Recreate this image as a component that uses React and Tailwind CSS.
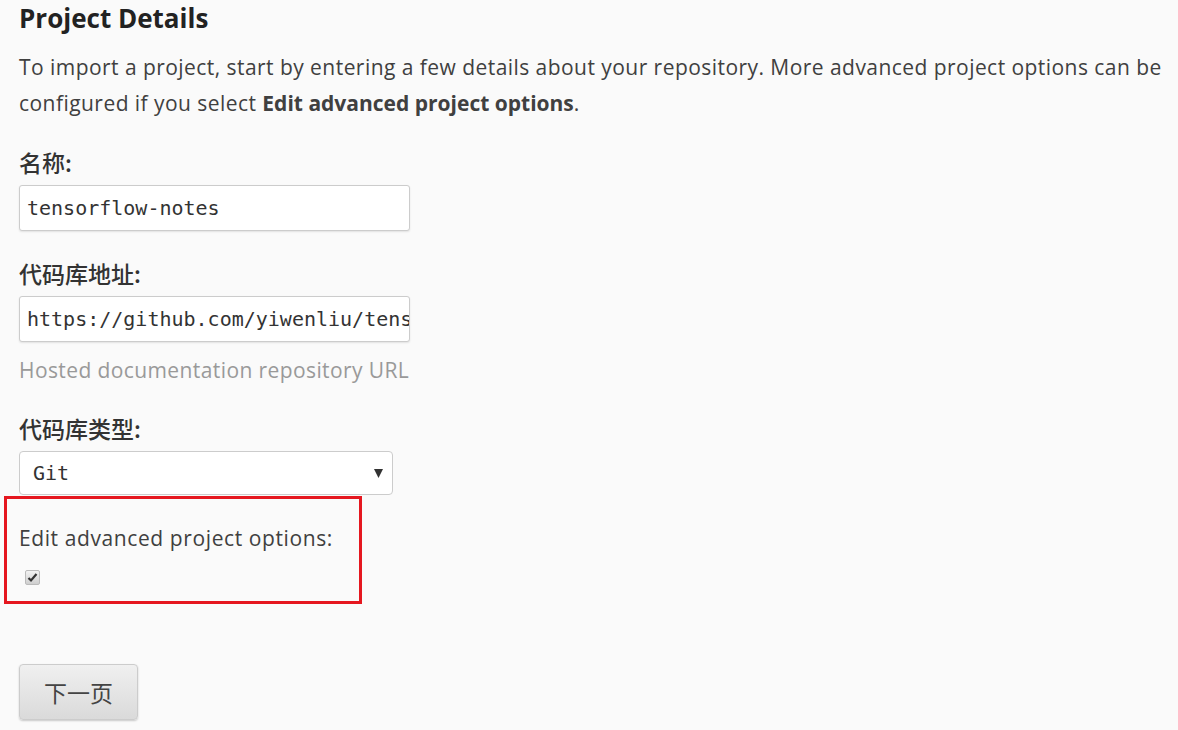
export default function App() {
  const sans = { fontFamily: '"Open Sans", "Noto Sans CJK SC", sans-serif' };
  const cjk = { fontFamily: '"Noto Sans CJK SC", sans-serif' };
  const mono = { fontFamily: '"DejaVu Sans Mono", monospace' };
  return (
    <div className="min-h-[730px] w-[1178px] bg-[#fafafa] text-[#404040]" style={sans}>
      <div className="pl-[19px]">
        <h1 className="text-[26px] font-bold leading-[36px] text-[#222]">Project Details</h1>
        <p className="mt-[13px] text-[21px] leading-[36px] tracking-[0.45px]">
          To import a project, start by entering a few details about your repository. More advanced project options can be configured if you select <b className="font-bold tracking-[0px]">Edit advanced project options</b>.
        </p>
        <div className="mt-[27px] text-[23px] leading-[28px] font-medium text-[#333]" style={cjk}>名称:</div>
        <div className="mt-[9px] flex h-[46px] w-[391px] items-center rounded-[3px] border border-[#ccc] bg-white px-[7px] text-[20px] text-[#333] shadow-[0_1px_2px_rgba(0,0,0,0.1)]" style={mono}>
          tensorflow-notes
        </div>
        <div className="mt-[28px] text-[23px] leading-[28px] font-medium text-[#333]" style={cjk}>代码库地址:</div>
        <div className="mt-[9px] flex h-[46px] w-[391px] items-center overflow-hidden whitespace-nowrap rounded-[3px] border border-[#ccc] bg-white px-[7px] text-[20px] text-[#333] shadow-[0_1px_2px_rgba(0,0,0,0.1)]" style={mono}>
          https://github.com/yiwenliu/tensorflow-notes
        </div>
        <div className="mt-[14px] text-[21px] leading-[28px] tracking-[0.4px] text-[#999]">Hosted documentation repository URL</div>
        <div className="mt-[30px] text-[23px] leading-[28px] font-medium text-[#333]" style={cjk}>代码库类型:</div>
        <div className="relative mt-[9px] flex h-[44px] w-[374px] items-center rounded-[4px] border border-[#ccc] bg-white px-[13px] text-[20px] text-[#333]" style={mono}>
          Git
          <svg className="absolute right-[9px] top-[17px]" width="9" height="9" viewBox="0 0 9 9">
            <path d="M0 0 L9 0 L4.5 9 Z" fill="#333" />
          </svg>
        </div>
      </div>
      <div className="ml-[4px] mt-[1px] h-[108px] w-[358px] border-[3px] border-[#e5171f] pl-[12px] pt-[25px]">
        <div className="text-[21px] leading-[28px] tracking-[0.6px]">Edit advanced project options:</div>
        <div className="mt-[18px] ml-[6px] flex h-[15px] w-[15px] items-center justify-center rounded-[2px] border border-[#bbb] bg-gradient-to-b from-[#f2f2f2] to-[#cfcfcf]">
          <svg width="11" height="11" viewBox="0 0 11 11">
            <path d="M1.5 6 L4 8.5 L9.5 2" fill="none" stroke="#333" strokeWidth="2.2" />
          </svg>
        </div>
      </div>
      <div className="pl-[19px] pt-[60px]">
        <button className="h-[56px] w-[119px] rounded-[4px] border border-[#ccc] bg-gradient-to-b from-[#f0f0f0] to-[#dadada] text-[23px] text-[#444] shadow-[0_1px_2px_rgba(0,0,0,0.2)]" style={cjk}>下一页</button>
      </div>
    </div>
  );
}
